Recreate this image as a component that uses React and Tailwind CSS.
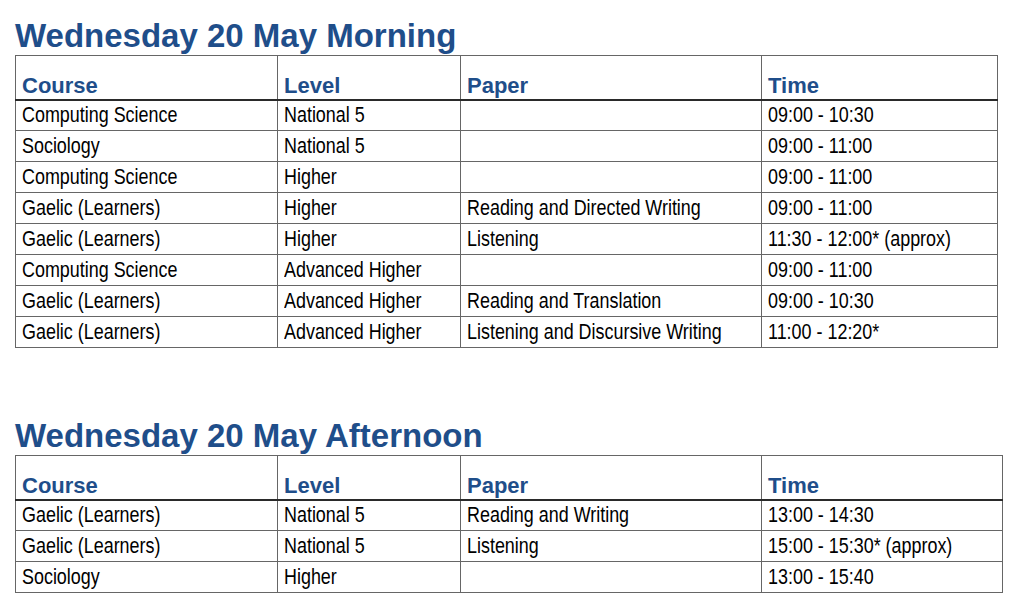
const morning = [
    ['Computing Science', 'National 5', '', '09:00 - 10:30'],
    ['Sociology', 'National 5', '', '09:00 - 11:00'],
    ['Computing Science', 'Higher', '', '09:00 - 11:00'],
    ['Gaelic (Learners)', 'Higher', 'Reading and Directed Writing', '09:00 - 11:00'],
    ['Gaelic (Learners)', 'Higher', 'Listening', '11:30 - 12:00* (approx)'],
    ['Computing Science', 'Advanced Higher', '', '09:00 - 11:00'],
    ['Gaelic (Learners)', 'Advanced Higher', 'Reading and Translation', '09:00 - 10:30'],
    ['Gaelic (Learners)', 'Advanced Higher', 'Listening and Discursive Writing', '11:00 - 12:20*'],
];

const afternoon = [
    ['Gaelic (Learners)', 'National 5', 'Reading and Writing', '13:00 - 14:30'],
    ['Gaelic (Learners)', 'National 5', 'Listening', '15:00 - 15:30* (approx)'],
    ['Sociology', 'Higher', '', '13:00 - 15:40'],
];

function Session({ title, rows, tableWidth, lastCol }) {
    return (
        <section>
            <h2 className="text-[33px] leading-[33px] font-bold text-[#1f4e8a] mb-[3px] whitespace-nowrap font-['Liberation_Sans',Arial,sans-serif]">
                {title}
            </h2>
            <table className={`table-fixed border-collapse border border-[#777] ${tableWidth}`}>
                <colgroup>
                    <col className="w-[262px]" />
                    <col className="w-[183px]" />
                    <col className="w-[301px]" />
                    <col className={lastCol} />
                </colgroup>
                <thead>
                    <tr className="h-[44px]">
                        {['Course', 'Level', 'Paper', 'Time'].map((h) => (
                            <th
                                key={h}
                                className="border border-[#666] border-b-2 border-b-[#2a2a2a] align-bottom text-left pl-[6px] pr-1 pb-[2px] text-[22px] leading-[22px] font-bold text-[#1f4e8a] font-['Liberation_Sans',Arial,sans-serif]"
                            >
                                {h}
                            </th>
                        ))}
                    </tr>
                </thead>
                <tbody>
                    {rows.map((row, i) => (
                        <tr key={i} className="h-[31px]">
                            {row.map((cell, j) => (
                                <td
                                    key={j}
                                    className="border border-[#666] align-middle pl-[6px] pr-1 py-0 text-[21.6px] leading-[24px] text-black whitespace-nowrap overflow-hidden font-['Liberation_Sans',Arial,sans-serif]"
                                >
                                    <span className="inline-block origin-left scale-x-[0.83]">{cell}</span>
                                </td>
                            ))}
                        </tr>
                    ))}
                </tbody>
            </table>
        </section>
    );
}

export default function App() {
    return (
        <div className="bg-white w-[1024px] h-[612px] overflow-hidden pl-[15px] pt-[19px]">
            <Session title="Wednesday 20 May Morning" rows={morning} tableWidth="w-[982px]" lastCol="w-[236px]" />
            <div className="h-[71px]" />
            <Session title="Wednesday 20 May Afternoon" rows={afternoon} tableWidth="w-[987px]" lastCol="w-[241px]" />
        </div>
    );
}
